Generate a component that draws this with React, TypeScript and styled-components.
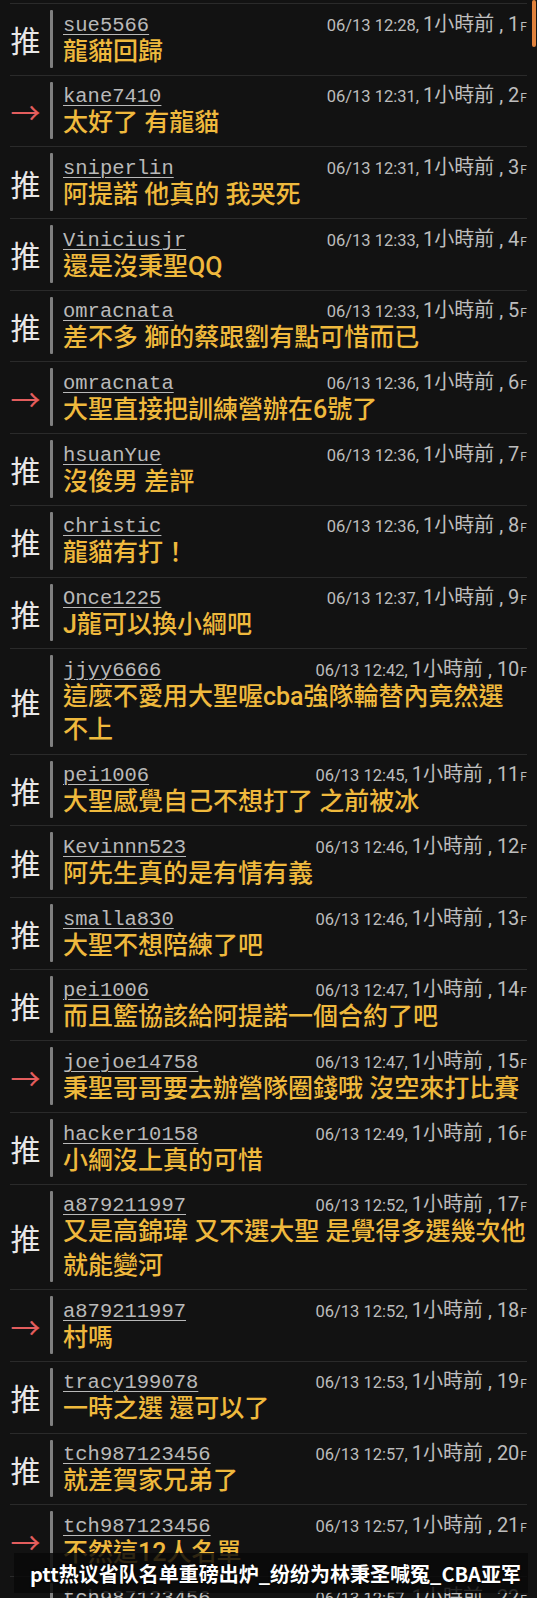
import styled, { createGlobalStyle } from 'styled-components';

const GlobalStyle = createGlobalStyle`
    html, body {
        margin: 0;
        padding: 0;
        background: #121212;
    }
    #root {
        height: 1598px;
        overflow: hidden;
    }
`;

const Page = styled.div`
    position: relative;
    height: 1598px;
    overflow: hidden;
    background: #121212;
    padding-top: 3px;
    box-sizing: border-box;
`;

const List = styled.div`
    display: flex;
    flex-direction: column;
    margin: 0 10px;
    border-top: 1px solid #2a2a2a;
`;

const Row = styled.div`
    display: flex;
    border-bottom: 1px solid #2a2a2a;
`;

const Tag = styled.div<{ $arrow?: boolean }>`
    width: 31px;
    flex: none;
    display: flex;
    align-items: center;
    justify-content: center;
    font-family: 'Noto Sans CJK TC', 'Noto Sans', sans-serif;
    font-size: 30px;
    color: ${({ $arrow }) => ($arrow ? '#e35d5d' : '#e8e8e8')};
`;

const Bar = styled.div`
    width: 3px;
    flex: none;
    margin: 6px 0 7px 9px;
    border-radius: 1px;
    background: #7f7f7f;
`;

const Body = styled.div`
    flex: 1;
    min-width: 0;
    padding: 8.5px 0 6.4px 10px;
`;

const Meta = styled.div`
    display: flex;
    justify-content: space-between;
    align-items: baseline;
    height: 22px;
    line-height: 22px;
`;

const User = styled.span`
    font-family: 'Liberation Mono', monospace;
    font-size: 20.5px;
    color: #b9b9b9;
    text-decoration: underline;
    text-underline-offset: 3px;
    text-decoration-thickness: 1px;
`;

const Stamp = styled.span`
    font-family: Roboto, 'Noto Sans CJK TC', sans-serif;
    color: #bdbdbd;
    white-space: nowrap;
`;

const Date = styled.span`
    font-size: 16.5px;
`;

const Ago = styled.span`
    font-size: 20px;
    margin-left: 4px;
`;

const Floor = styled.span`
    font-size: 12px;
    margin-left: 1px;
`;

const Text = styled.div`
    font-family: Roboto, 'Noto Sans CJK TC', sans-serif;
    font-size: 25px;
    line-height: 33.8px;
    min-height: 33.8px;
    color: #efb93d;
    font-weight: 500;
`;

const Caption = styled.div`
    position: absolute;
    left: 14px;
    bottom: 5px;
    width: 514px;
    height: 40px;
    box-sizing: border-box;
    padding-left: 16px;
    display: flex;
    align-items: center;
    background: rgba(10, 10, 10, 0.84);
    color: #ffffff;
    font-family: 'Noto Sans CJK SC', 'Noto Sans', sans-serif;
    font-weight: 700;
    font-size: 20px;
    text-shadow: 0 0 2px rgba(0, 0, 0, 0.8);
    white-space: nowrap;
    overflow: hidden;
`;

const Thumb = styled.div`
    position: absolute;
    top: 0;
    right: 1px;
    width: 4px;
    height: 47px;
    border-radius: 2px;
    background: #e0823d;
`;

type Push = {
    tag: 'push' | 'arrow';
    user: string;
    time: string;
    text: string;
};

const pushes: Push[] = [
    { tag: 'push', user: 'sue5566', time: '12:28', text: '龍貓回歸' },
    { tag: 'arrow', user: 'kane7410', time: '12:31', text: '太好了 有龍貓' },
    { tag: 'push', user: 'sniperlin', time: '12:31', text: '阿提諾 他真的 我哭死' },
    { tag: 'push', user: 'Viniciusjr', time: '12:33', text: '還是沒秉聖QQ' },
    { tag: 'push', user: 'omracnata', time: '12:33', text: '差不多 獅的蔡跟劉有點可惜而已' },
    { tag: 'arrow', user: 'omracnata', time: '12:36', text: '大聖直接把訓練營辦在6號了' },
    { tag: 'push', user: 'hsuanYue', time: '12:36', text: '沒俊男 差評' },
    { tag: 'push', user: 'christic', time: '12:36', text: '龍貓有打！' },
    { tag: 'push', user: 'Once1225', time: '12:37', text: 'J龍可以換小綱吧' },
    { tag: 'push', user: 'jjyy6666', time: '12:42', text: '這麼不愛用大聖喔cba強隊輪替內竟然選不上' },
    { tag: 'push', user: 'pei1006', time: '12:45', text: '大聖感覺自己不想打了 之前被冰' },
    { tag: 'push', user: 'Kevinnn523', time: '12:46', text: '阿先生真的是有情有義' },
    { tag: 'push', user: 'smalla830', time: '12:46', text: '大聖不想陪練了吧' },
    { tag: 'push', user: 'pei1006', time: '12:47', text: '而且籃協該給阿提諾一個合約了吧' },
    { tag: 'arrow', user: 'joejoe14758', time: '12:47', text: '秉聖哥哥要去辦營隊圈錢哦 沒空來打比賽' },
    { tag: 'push', user: 'hacker10158', time: '12:49', text: '小綱沒上真的可惜' },
    { tag: 'push', user: 'a879211997', time: '12:52', text: '又是高錦瑋 又不選大聖 是覺得多選幾次他就能變河' },
    { tag: 'arrow', user: 'a879211997', time: '12:52', text: '村嗎' },
    { tag: 'push', user: 'tracy199078', time: '12:53', text: '一時之選 還可以了' },
    { tag: 'push', user: 'tch987123456', time: '12:57', text: '就差賀家兄弟了' },
    { tag: 'arrow', user: 'tch987123456', time: '12:57', text: '不然這12人名單' },
    { tag: 'push', user: 'tch987123456', time: '12:57', text: '' },
];

const App = () => (
    <>
        <GlobalStyle />
        <Page>
            <List>
                {pushes.map((p, i) => (
                    <Row key={i}>
                        <Tag $arrow={p.tag === 'arrow'}>{p.tag === 'arrow' ? '→' : '推'}</Tag>
                        <Bar />
                        <Body>
                            <Meta>
                                <User>{p.user}</User>
                                <Stamp>
                                    <Date>06/13 {p.time},</Date>
                                    <Ago>1小時前 , {i + 1}</Ago>
                                    <Floor>F</Floor>
                                </Stamp>
                            </Meta>
                            <Text>{p.text}</Text>
                        </Body>
                    </Row>
                ))}
            </List>
            <Thumb />
            <Caption>ptt热议省队名单重磅出炉_纷纷为林秉圣喊冤_CBA亚军</Caption>
        </Page>
    </>
);

export default App;
